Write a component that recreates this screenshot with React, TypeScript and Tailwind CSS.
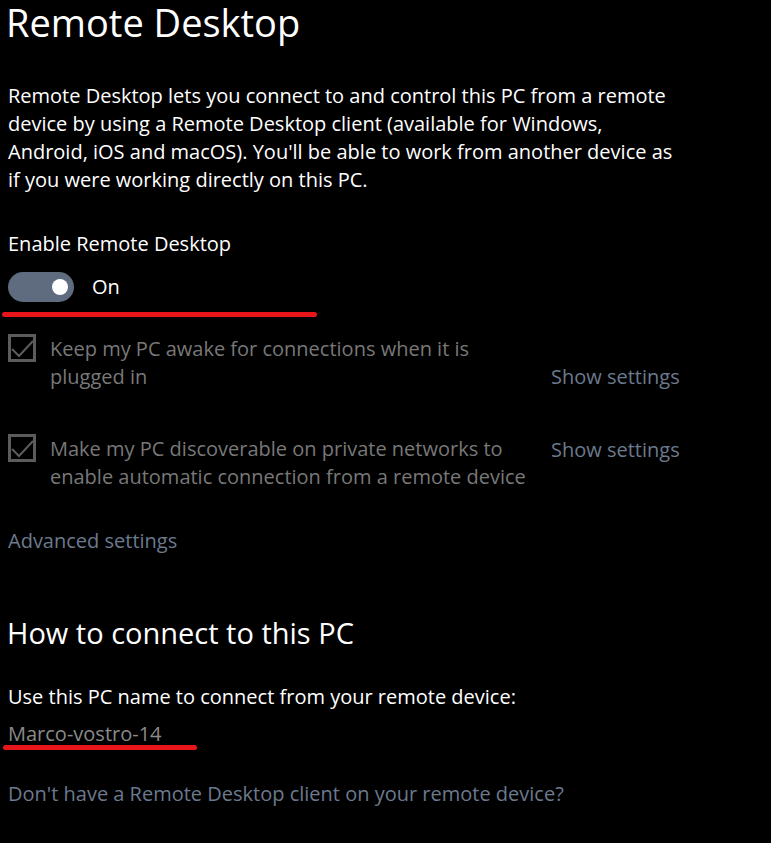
import React from 'react';

// Remote Desktop settings page (dark theme)

const font = { fontFamily: '"Open Sans", "Noto Sans", sans-serif' };

const CheckBox: React.FC = () => (
  <div className="w-[28px] h-[28px] border-[3px] border-[#5c5c5c] relative">
    <svg className="absolute -left-[3px] -top-[3px]" width="28" height="28" viewBox="0 0 28 28" fill="none">
      <polyline points="4,15 11,22 25,7" stroke="#5c5c5c" strokeWidth="2" />
    </svg>
  </div>
);

export default function App() {
  return (
    <div className="bg-black w-[771px] h-[843px] overflow-hidden text-white px-[8px]" style={font}>
      <h1 className="-mt-[4px] h-[52px] text-[38px] leading-[52px] -ml-[2px] font-normal">Remote Desktop</h1>

      <p className="mt-[34px] text-[20px] leading-[28px]">
        <span className="block whitespace-nowrap">Remote Desktop lets you connect to and control this PC from a remote</span>
        <span className="block whitespace-nowrap">device by using a Remote Desktop client (available for Windows,</span>
        <span className="block whitespace-nowrap">Android, iOS and macOS). You'll be able to work from another device as</span>
        <span className="block whitespace-nowrap">if you were working directly on this PC.</span>
      </p>

      <div className="mt-[36px] text-[20px] leading-[28px]">Enable Remote Desktop</div>

      <div className="mt-[14px] h-[30px] flex items-center">
        <div className="w-[66px] h-[30px] rounded-full bg-[#5f6b7e] flex items-center justify-end pr-[6px]">
          <div className="w-[16px] h-[16px] rounded-full bg-white" />
        </div>
        <span className="ml-[18px] text-[20px] leading-[28px]">On</span>
      </div>

      <div className="mt-[10px] -ml-[6px] h-[5px] w-[315px] rounded-full bg-[#e8151b]" />

      <div className="mt-[17px] grid grid-cols-[42px_501px_auto] text-[20px] leading-[28px]">
        <CheckBox />
        <div className="mt-[1px] text-[#787878]">
          <span className="block whitespace-nowrap">Keep my PC awake for connections when it is</span>
          <span className="block whitespace-nowrap">plugged in</span>
        </div>
        <div className="mt-[29px] text-[#6b7a8e] whitespace-nowrap">Show settings</div>
      </div>

      <div className="mt-[43px] grid grid-cols-[42px_501px_auto] text-[20px] leading-[28px]">
        <CheckBox />
        <div className="mt-[1px] text-[#787878]">
          <span className="block whitespace-nowrap">Make my PC discoverable on private networks to</span>
          <span className="block whitespace-nowrap">enable automatic connection from a remote device</span>
        </div>
        <div className="mt-[2px] text-[#6b7a8e] whitespace-nowrap">Show settings</div>
      </div>

      <div className="mt-[36px] text-[20px] leading-[28px] text-[#6b7a8e]">Advanced settings</div>

      <h2 className="mt-[58px] -ml-[1px] text-[29px] leading-[40px] font-normal">How to connect to this PC</h2>

      <div className="mt-[30px] text-[20px] leading-[28px]">Use this PC name to connect from your remote device:</div>

      <div className="mt-[9px] text-[20px] leading-[28px] text-[#8a8a8a]">Marco-vostro-14</div>
      <div className="-mt-[3px] -ml-[5px] h-[5px] w-[194px] rounded-full bg-[#e8151b]" />

      <div className="mt-[30px] text-[20px] leading-[28px] text-[#6b7a8e]">Don't have a Remote Desktop client on your remote device?</div>
    </div>
  );
}
